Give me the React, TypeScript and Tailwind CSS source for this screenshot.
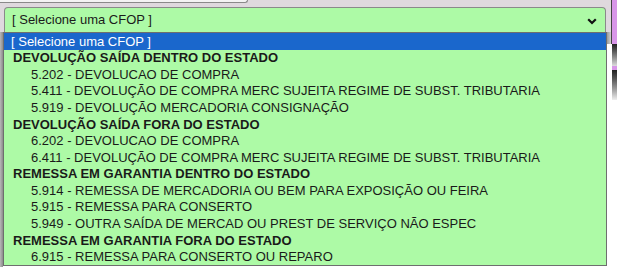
import React from 'react';

type Item = { kind: 'group' | 'option' | 'selected'; label: string };

const items: Item[] = [
  { kind: 'selected', label: '[ Selecione uma CFOP ]' },
  { kind: 'group', label: 'DEVOLUÇÃO SAÍDA DENTRO DO ESTADO' },
  { kind: 'option', label: '5.202 - DEVOLUCAO DE COMPRA' },
  { kind: 'option', label: '5.411 - DEVOLUÇÃO DE COMPRA MERC SUJEITA REGIME DE SUBST. TRIBUTARIA' },
  { kind: 'option', label: '5.919 - DEVOLUÇÃO MERCADORIA CONSIGNAÇÃO' },
  { kind: 'group', label: 'DEVOLUÇÃO SAÍDA FORA DO ESTADO' },
  { kind: 'option', label: '6.202 - DEVOLUCAO DE COMPRA' },
  { kind: 'option', label: '6.411 - DEVOLUÇÃO DE COMPRA MERC SUJEITA REGIME DE SUBST. TRIBUTARIA' },
  { kind: 'group', label: 'REMESSA EM GARANTIA DENTRO DO ESTADO' },
  { kind: 'option', label: '5.914 - REMESSA DE MERCADORIA OU BEM PARA EXPOSIÇÃO OU FEIRA' },
  { kind: 'option', label: '5.915 - REMESSA PARA CONSERTO' },
  { kind: 'option', label: '5.949 - OUTRA SAÍDA DE MERCAD OU PREST DE SERVIÇO NÃO ESPEC' },
  { kind: 'group', label: 'REMESSA EM GARANTIA FORA DO ESTADO' },
  { kind: 'option', label: '6.915 - REMESSA PARA CONSERTO OU REPARO' },
];

const Row: React.FC<{ item: Item }> = ({ item }) => {
  if (item.kind === 'selected') {
    return (
      <div className="h-[16.57px] flex items-center pl-[7px] bg-[#1a67cc] text-white">
        {item.label}
      </div>
    );
  }
  if (item.kind === 'group') {
    return (
      <div className="h-[16.57px] flex items-center pl-[9px] font-bold text-[#1a1a1a]">
        {item.label}
      </div>
    );
  }
  return (
    <div className="h-[16.57px] flex items-center pl-[27px] text-[#1a1a1a]">
      {item.label}
    </div>
  );
};

export default function App() {
  return (
    <div className="w-[617px] h-[267px] overflow-hidden flex flex-col bg-white text-[13px] font-['Liberation_Sans',Arial,sans-serif]">
      {/* top area with select */}
      <div className="h-[32px] flex bg-[#dfd9de]">
        <div className="flex-1 flex flex-col">
          <div className="h-[3px] w-[248px] bg-[#f4f4f4] border-b border-r border-[#8a8a8a] rounded-br-[4px]" />
          <div className="flex-1 flex items-end pl-[4px] pr-[5px]">
            <div className="h-[25px] w-full bg-[#adfaa6] border border-b-0 border-[#8a8a8a] rounded-t-[4px] flex items-center justify-between pl-[7px] pr-[8px] text-[#1a1a1a]">
              <span>[ Selecione uma CFOP ]</span>
              <svg width="10" height="7" viewBox="0 0 10 7" className="mb-[-2px]">
                <path d="M1.2 1.2 L5 5 L8.8 1.2" fill="none" stroke="#111" strokeWidth="2.2" />
              </svg>
            </div>
          </div>
        </div>
        <div className="w-[1px] bg-[#444]" />
        <div className="w-[5px] bg-[#d896e8]" />
      </div>

      {/* open dropdown list */}
      <div className="flex-1 flex">
        <div className="w-[3px] bg-gradient-to-r from-[#b8b8b8] to-[#8c8c8c]" />
        <div className="w-[604px] h-[234px] bg-[#adfaa6] border border-[#6e6e6e] leading-none">
          {items.map((it, i) => (
            <Row key={i} item={it} />
          ))}
        </div>
        <div className="flex-1 flex">
          <div className="w-[4px] flex flex-col">
            <div className="h-[12px] bg-gradient-to-r from-[#9a9a9a] to-[#d0d0d0]" />
            <div className="flex-1 bg-white" />
          </div>
          <div className="w-[1px] flex flex-col">
            <div className="h-[12px] bg-[#444]" />
            <div className="flex-1 bg-white" />
          </div>
          <div className="flex-1 flex flex-col">
            <div className="h-[12px] bg-[#d896e8]" />
            <div className="h-[22px] bg-gradient-to-b from-[#222] to-[#ddd]" />
            <div className="h-[4px] bg-[#d896e8]" />
            <div className="h-[30px] bg-gradient-to-b from-[#222] to-[#eee]" />
            <div className="flex-1 bg-white" />
          </div>
        </div>
      </div>
    </div>
  );
}
